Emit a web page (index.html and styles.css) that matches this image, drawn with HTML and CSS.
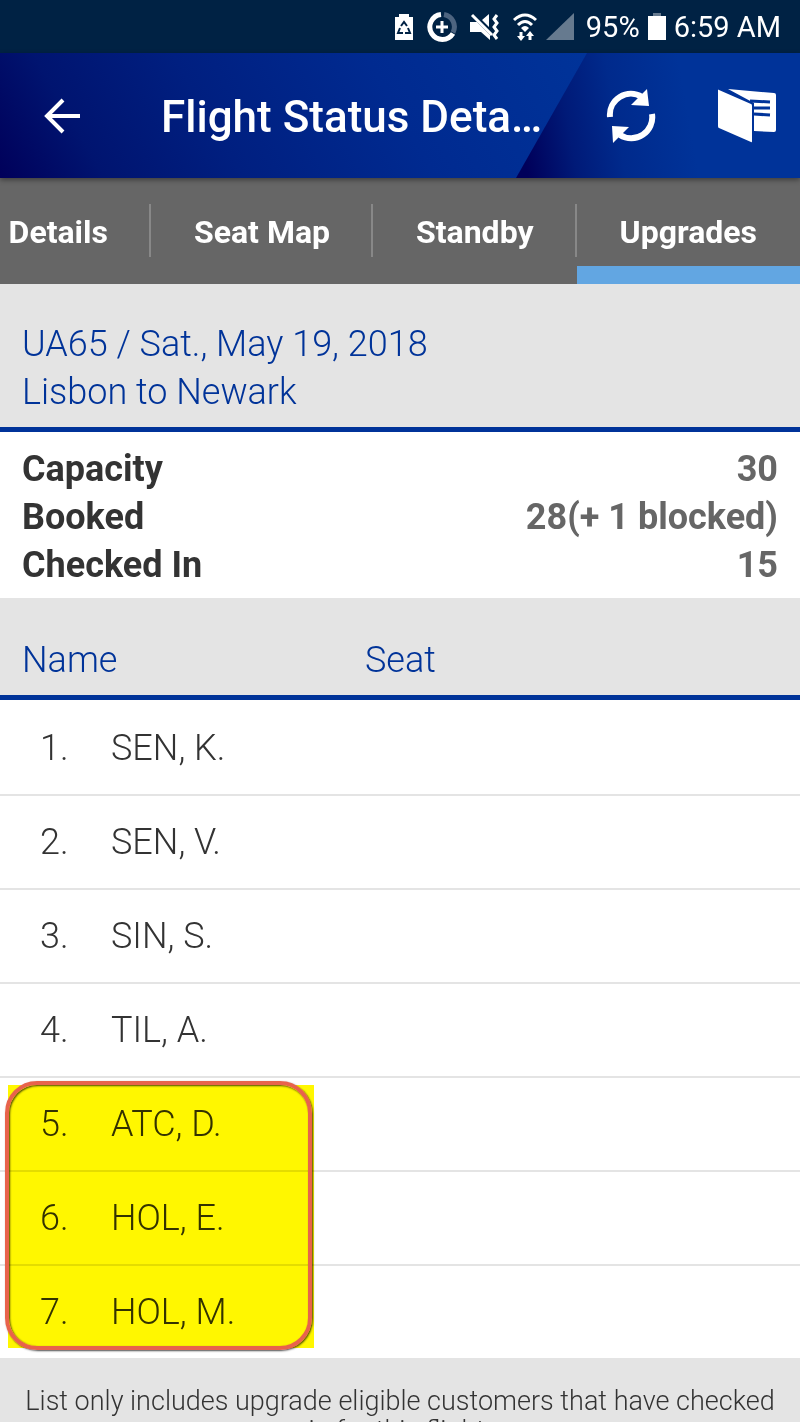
FILE: index.html
```html
<!DOCTYPE html>
<html lang="en">
<head>
    <meta charset="UTF-8">
    <meta name="viewport" content="width=device-width, initial-scale=1.0">
    <title>Flight Status Details</title>
    <link rel="stylesheet" href="styles.css">
</head>
<body>
    <div class="status-bar">
        <svg class="battery-saver" width="20" height="28" viewBox="0 0 20 28">
            <path d="M1 4h4V1h10v3h4v23H1z" fill="#fff"/>
            <path d="M7 13l3-4 3 4M14 15l2 5h-5M9 20H4l2-5" fill="none" stroke="#002244" stroke-width="2"/>
        </svg>
        <svg class="data-saver" width="32" height="32" viewBox="0 0 32 32" fill="none" stroke-width="5">
            <path d="M18 3.500a12.500 12.500 0 0 1 9 18" stroke="#4d6480"/>
            <path d="M15 3.500a12.500 12.500 0 1 0 12 19" stroke="#fff"/>
            <path d="M16 10v12M10 16h12" stroke="#fff" stroke-width="3"/>
        </svg>
        <svg class="mute" width="30" height="28" viewBox="0 0 30 28">
            <path d="M0 9h7l13 13v5l-9-8H0zM12 7l7-6v13z" fill="#fff"/>
            <path d="M2 2l20 20" stroke="#fff" stroke-width="3"/>
            <path d="M27 2l-3 4 3 4-3 4 3 4-3 4 3 4" fill="none" stroke="#fff" stroke-width="3"/>
        </svg>
        <svg class="wifi" width="26" height="28" viewBox="0 0 26 28" fill="none" stroke="#fff" stroke-width="3">
            <path d="M2 7q11-10 22 0M6 12q7-7 14 0"/>
            <path d="M9 15q4-4 8 0l-4 4z" fill="#fff" stroke="none"/>
            <path d="M9 19v5M18 27v-5"/>
            <path d="M5 23h8l-4 5zM14 23h8l-4-5z" fill="#fff" stroke="none"/>
        </svg>
        <svg class="signal" width="28" height="28" viewBox="0 0 28 28">
            <path d="M28 0v27H0z" fill="#667a8f"/>
        </svg>
        <span>95%</span>
        <svg class="battery" width="18" height="28" viewBox="0 0 18 28">
            <path d="M5 0h8v4H5z" fill="#667a8f"/>
            <path d="M0 3h18v24H0z" fill="#fff"/>
        </svg>
        <span>6:59 AM</span>
    </div>

    <header class="header">
        <button class="icon-btn" aria-label="Back">
            <svg width="36" height="36" viewBox="0 0 36 36" fill="none" stroke="#fff" stroke-width="4">
                <path d="M19 2L3 18l16 16M3 18h33"/>
            </svg>
        </button>
        <h1>Flight Status Deta…</h1>
        <button class="icon-btn" aria-label="Refresh">
            <svg width="50" height="54" viewBox="0 0 50 54">
                <path d="M4 28A21 21 0 0 1 36 8M46 25A21 21 0 0 1 14 46" fill="none" stroke="#fff" stroke-width="6"/>
                <path d="M41 0l2 17-18-1zM7 54L6 37l17 1z" fill="#fff"/>
            </svg>
        </button>
        <button class="icon-btn" aria-label="Timetable">
            <svg width="58" height="54" viewBox="0 0 58 54">
                <path d="M0 1q0-1 1 0l32 14q1 0 1 2v35q0 2-1 1L1 39q-1 0-1-2z" fill="#fff"/>
                <path d="M10 0l46 4q2 0 2 2v35q0 2-2 2l-20-1V14z" fill="#fff"/>
                <path d="M32 12l20 1M36 19h16M36 25l16 1" stroke="#003399" stroke-width="3"/>
            </svg>
        </button>
    </header>

    <nav class="tabs">
        <a href="#details">Details</a>
        <a href="#seat-map">Seat Map</a>
        <a href="#standby">Standby</a>
        <a href="#upgrades" class="active">Upgrades</a>
    </nav>

    <main>
        <section class="flight">
            <p>UA65 / Sat., May 19, 2018</p>
            <p>Lisbon to Newark</p>
        </section>

        <dl class="summary">
            <div><dt>Capacity</dt><dd>30</dd></div>
            <div><dt>Booked</dt><dd>28(+ 1 blocked)</dd></div>
            <div><dt>Checked In</dt><dd>15</dd></div>
        </dl>

        <div class="list">
            <table>
                <colgroup>
                    <col class="col-num">
                    <col class="col-name">
                    <col>
                </colgroup>
                <thead>
                    <tr><th colspan="2">Name</th><th>Seat</th></tr>
                </thead>
                <tbody>
                    <tr><td class="num">1.</td><td>SEN, K.</td><td></td></tr>
                    <tr><td class="num">2.</td><td>SEN, V.</td><td></td></tr>
                    <tr><td class="num">3.</td><td>SIN, S.</td><td></td></tr>
                    <tr><td class="num">4.</td><td>TIL, A.</td><td></td></tr>
                    <tr><td class="num">5.</td><td>ATC, D.</td><td></td></tr>
                    <tr><td class="num">6.</td><td>HOL, E.</td><td></td></tr>
                    <tr><td class="num">7.</td><td>HOL, M.</td><td></td></tr>
                </tbody>
            </table>
            <div class="highlight"></div>
            <div class="outline"></div>
        </div>

        <p class="note">List only includes upgrade eligible customers that have checked in for this flight.</p>
    </main>
</body>
</html>
```

FILE: styles.css
```css
* {
    box-sizing: border-box;
}
body {
    margin: 0;
    height: 100vh;
    display: flex;
    flex-direction: column;
    overflow: hidden;
    font-family: Roboto, sans-serif;
    font-size: 36px;
    font-weight: 300;
    line-height: 48px;
    color: #333;
    background: #e4e4e4;
}
svg {
    display: block;
    flex: none;
}
p, h1, dl, dd {
    margin: 0;
}

/* status bar */
.status-bar {
    flex: none;
    height: 53px;
    padding-right: 19px;
    display: flex;
    align-items: center;
    justify-content: flex-end;
    gap: 12px;
    background: #002244;
    color: #fff;
    font-size: 29px;
    font-weight: 400;
}
.status-bar span {
    white-space: nowrap;
}
.status-bar .wifi,
.status-bar .battery {
    margin-right: -4px;
}
.status-bar .battery {
    margin-left: -4px;
}

/* header */
.header {
    flex: none;
    height: 125px;
    padding: 0 24px 0 44px;
    display: flex;
    align-items: center;
    background: linear-gradient(60deg, #00005a 0%, #001470 12%, #001f80 28%, #002a90 50%, #003399 75%);
    position: relative;
    z-index: 1;
    box-shadow: 0 2px 5px rgba(0, 0, 0, 0.4);
}
/* slanted panel behind the actions */
.header::before {
    content: "";
    position: absolute;
    z-index: -1;
    top: 0;
    right: 0;
    bottom: 0;
    width: 284px;
    clip-path: polygon(71px 0, 100% 0, 100% 100%, 0 100%);
    background: linear-gradient(80deg, #00005a 4%, #001a78 20%, #002a8c 36%, #003399 60%);
}
.header h1 {
    flex: 1;
    margin-left: 81px;
    padding-top: 2px;
    color: #fff;
    font-size: 44px;
    font-weight: 500;
    white-space: nowrap;
}
.icon-btn {
    padding: 0;
    border: none;
    background: none;
    cursor: pointer;
}
.icon-btn + .icon-btn {
    margin-left: 62px;
}

/* tabs */
.tabs {
    flex: none;
    height: 106px;
    display: flex;
    justify-content: flex-end;
    overflow: hidden;
    background: #666;
}
.tabs a {
    flex: none;
    display: flex;
    align-items: center;
    padding: 2px 43px 0;
    color: #fff;
    font-size: 32px;
    font-weight: 700;
    text-decoration: none;
    background: linear-gradient(#888, #888) right 26px / 2px 53px no-repeat;
}
.tabs a.active {
    background: linear-gradient(#62a6e2, #62a6e2) bottom / 100% 18px no-repeat;
}

/* flight */
.flight {
    padding: 36px 22px 11px;
    border-bottom: 5px solid #003399;
    color: #003399;
}
.summary {
    padding: 13px 22px 9px;
    background: #fff;
    font-weight: 700;
}
.summary div {
    display: flex;
    justify-content: space-between;
}
.summary dd {
    color: #666;
}

/* upgrade list */
.list {
    position: relative;
}
table {
    width: 100%;
    border-collapse: separate;
    border-spacing: 0;
    table-layout: fixed;
}
.col-num {
    width: 111px;
}
.col-name {
    width: 254px;
}
th {
    padding: 38px 0 11px;
    border-bottom: 5px solid #003399;
    color: #003399;
    font-weight: 300;
    text-align: left;
}
th:first-child {
    padding-left: 22px;
}
tbody {
    background: #fff;
}
td {
    height: 94px;
    padding: 0;
    border-top: 2px solid #e4e4e4;
}
tr:first-child td {
    border-top-color: #fff;
}
td.num {
    padding-left: 40px;
}
.highlight {
    position: absolute;
    left: 8px;
    bottom: 10px;
    width: 306px;
    height: 263px;
    background: #fff700;
    mix-blend-mode: multiply;
}
.outline {
    position: absolute;
    left: 5px;
    bottom: 8px;
    width: 307px;
    height: 269px;
    border: 4px solid #e8634c;
    border-radius: 32px;
    box-shadow: 1px 1px 2px rgba(0, 0, 0, 0.7), inset 1px 1px 2px rgba(0, 0, 0, 0.7);
}

.note {
    padding: 28px 22px;
    font-size: 27px;
    line-height: 30px;
    text-align: center;
}
```
